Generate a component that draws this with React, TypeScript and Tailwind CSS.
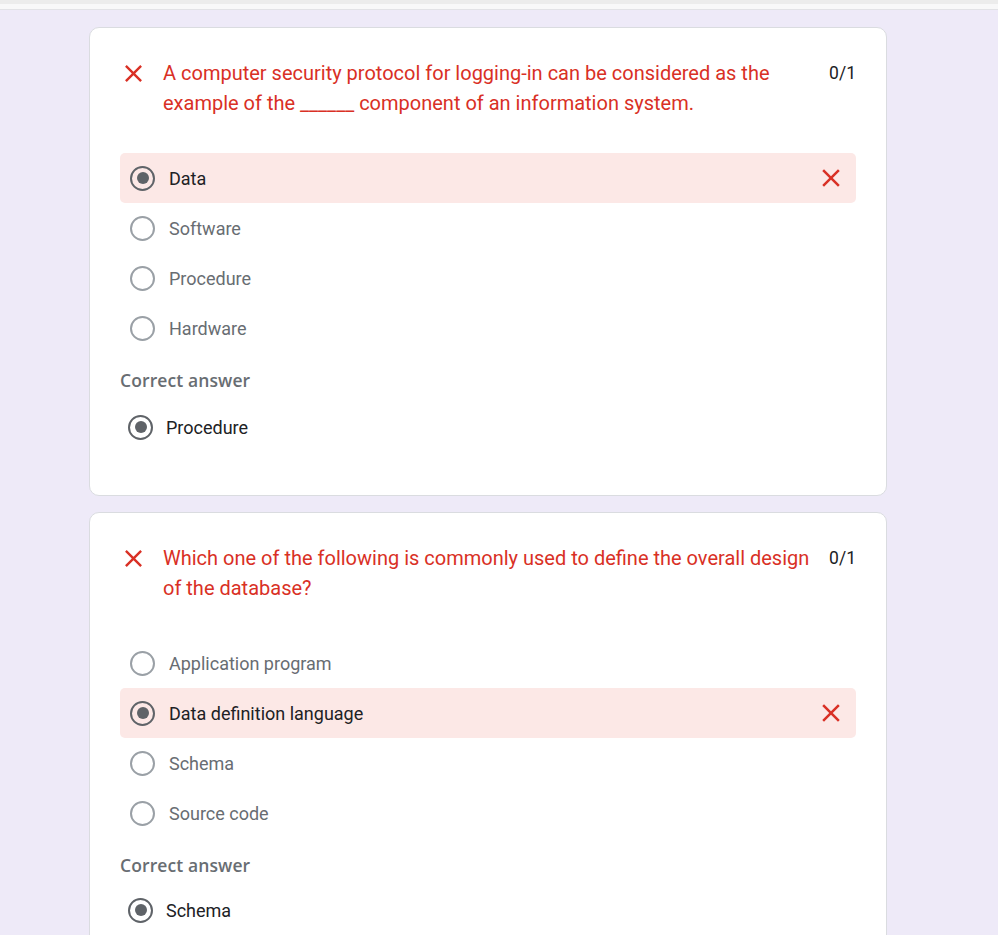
import React from "react";

const RED = "#d93025";

function XIcon({ size = 19 }: { size?: number }) {
  return (
    <svg width={size} height={size} viewBox="0 0 24 24" fill={RED}>
      <path d="M19 6.41 17.59 5 12 10.59 6.41 5 5 6.41 10.59 12 5 17.59 6.41 19 12 13.41 17.59 19 19 17.59 13.41 12z" />
    </svg>
  );
}

function Radio({ checked }: { checked: boolean }) {
  return (
    <div
      className={
        "w-[25px] h-[25px] rounded-full flex items-center justify-center shrink-0 border-[2.5px] " +
        (checked ? "border-[#5f6368]" : "border-[#9aa0a6]")
      }
    >
      {checked && <div className="w-[12px] h-[12px] rounded-full bg-[#5f6368]" />}
    </div>
  );
}

type Q = {
  title: string;
  options: string[];
  chosen: number;
  correct: string;
};

const questions: Q[] = [
  {
    title:
      "A computer security protocol for logging-in can be considered as the example of the ______ component of an information system.",
    options: ["Data", "Software", "Procedure", "Hardware"],
    chosen: 0,
    correct: "Procedure",
  },
  {
    title:
      "Which one of the following is commonly used to define the overall design of the database?",
    options: ["Application program", "Data definition language", "Schema", "Source code"],
    chosen: 1,
    correct: "Schema",
  },
];

function Card({ q, idx }: { q: Q; idx: number }) {
  return (
    <div className="bg-white border border-[#dadce0] rounded-[10px] px-[30px] pt-[30px] pb-[43px]">
      <div className="flex items-start">
        <div className="w-[44px] h-[30px] flex items-center -ml-[1px] shrink-0">
          <XIcon size={29} />
        </div>
        <div className="flex-1 text-[20px] leading-[30px] text-[#d93025] pr-[14px]">
          {q.title}
        </div>
        <div className="text-[17.5px] leading-[30px] text-[#202124] shrink-0 pl-[1px]">0/1</div>
      </div>
      <div className="mt-[35px]">
        {q.options.map((o, i) => {
          const sel = i === q.chosen;
          return (
            <div
              key={o}
              className={
                "h-[50px] flex items-center pl-[10px] pr-[10px] rounded-[5px] " +
                (sel ? "bg-[#fce8e6]" : "")
              }
            >
              <Radio checked={sel} />
              <div
                className={
                  "ml-[14px] flex-1 text-[18px] " +
                  (sel ? "text-[#202124]" : "text-[#686d72]")
                }
              >
                {o}
              </div>
              {sel && <XIcon size={30} />}
            </div>
          );
        })}
      </div>
      <div
        className="mt-[15px] text-[17.5px] leading-[24px] font-semibold text-[#686d72] tracking-[0.1px]"
        style={{ fontFamily: "'Open Sans', Roboto, sans-serif" }}
      >
        Correct answer
      </div>
      <div className={(idx === 0 ? "mt-[10px]" : "mt-[8px]") + " h-[50px] flex items-center pl-[8px]"}>
        <Radio checked />
        <div className="ml-[13px] text-[18px] text-[#202124]">{q.correct}</div>
      </div>
    </div>
  );
}

export default function App() {
  return (
    <div
      className="min-h-[935px] w-[998px] bg-[#eeeaf8] overflow-hidden"
      style={{ fontFamily: "Roboto, 'Liberation Sans', sans-serif" }}
    >
      <div className="h-[4px] bg-[#ececec]" />
      <div className="h-[6px] bg-[#f8f8f9] border-b border-[#e2e2e6]" />
      <div className="pl-[89px] w-[887px] pt-[17px] flex flex-col gap-[16px]">
        {questions.map((q, i) => (
          <Card key={i} q={q} idx={i} />
        ))}
      </div>
    </div>
  );
}
